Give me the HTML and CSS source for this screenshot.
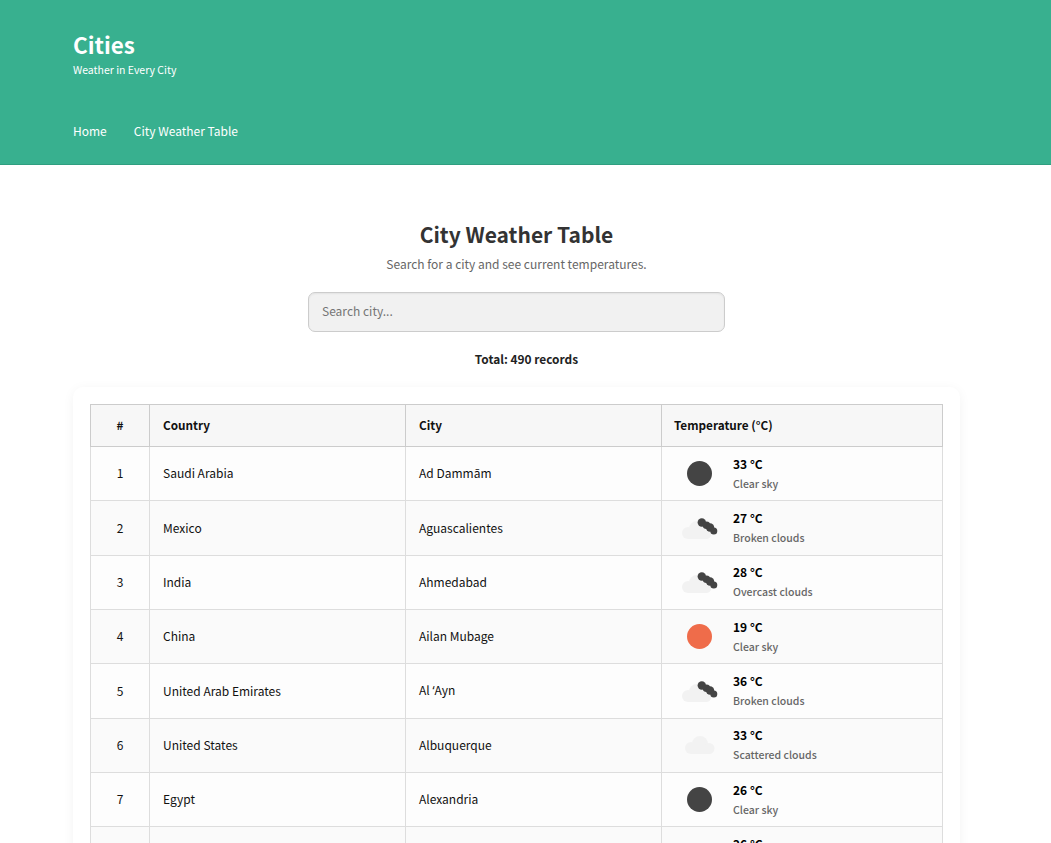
FILE: index.html
```html
<!DOCTYPE html>
<html lang="en">
<head>
  <meta charset="UTF-8">
  <meta name="viewport" content="width=device-width, initial-scale=1.0">
  <title>Cities</title>
  <link rel="stylesheet" href="styles.css">
</head>
<body>

  <header class="site-header">
    <div class="brand">
      <h1>Cities</h1>
      <p>Weather in Every City</p>
    </div>
    <nav class="site-nav">
      <a href="#">Home</a>
      <a href="#">City Weather Table</a>
    </nav>
  </header>

  <!-- icons used by the table rows -->
  <svg class="icon-defs" width="0" height="0" aria-hidden="true">
    <defs>
      <g id="cloud" fill="#f2f2f2">
        <circle cx="6" cy="17" r="6"/>
        <circle cx="15" cy="13" r="8"/>
        <circle cx="24" cy="17.500" r="5.500"/>
        <rect x="6" y="15" width="18" height="8"/>
      </g>
      <g id="dark-bits" fill="#444">
        <circle cx="19.800" cy="6.500" r="4.200"/>
        <circle cx="24.500" cy="9.200" r="3.800"/>
        <circle cx="28" cy="11.500" r="4.200"/>
        <circle cx="31.800" cy="15" r="3.500"/>
      </g>
    </defs>
  </svg>

  <main class="content">
    <h2>City Weather Table</h2>
    <p class="subtitle">Search for a city and see current temperatures.</p>
    <input class="search" type="text" placeholder="Search city...">
    <p class="total">Total: 490 records</p>

    <div class="card">
      <table class="weather">
        <thead>
          <tr>
            <th class="num">#</th>
            <th>Country</th>
            <th>City</th>
            <th>Temperature (°C)</th>
          </tr>
        </thead>
        <tbody>
          <tr>
            <td class="num">1</td><td>Saudi Arabia</td><td>Ad Dammām</td>
            <td><div class="temp"><span class="sun dark"></span><div><b>33 °C</b><small>Clear sky</small></div></div></td>
          </tr>
          <tr>
            <td class="num">2</td><td>Mexico</td><td>Aguascalientes</td>
            <td><div class="temp"><svg class="ico"><use href="#cloud"/><use href="#dark-bits"/></svg><div><b>27 °C</b><small>Broken clouds</small></div></div></td>
          </tr>
          <tr>
            <td class="num">3</td><td>India</td><td>Ahmedabad</td>
            <td><div class="temp"><svg class="ico"><use href="#cloud"/><use href="#dark-bits"/></svg><div><b>28 °C</b><small>Overcast clouds</small></div></div></td>
          </tr>
          <tr>
            <td class="num">4</td><td>China</td><td>Ailan Mubage</td>
            <td><div class="temp"><span class="sun hot"></span><div><b>19 °C</b><small>Clear sky</small></div></div></td>
          </tr>
          <tr>
            <td class="num">5</td><td>United Arab Emirates</td><td>Al <span class="quote">‘</span>Ayn</td>
            <td><div class="temp"><svg class="ico"><use href="#cloud"/><use href="#dark-bits"/></svg><div><b>36 °C</b><small>Broken clouds</small></div></div></td>
          </tr>
          <tr>
            <td class="num">6</td><td>United States</td><td>Albuquerque</td>
            <td><div class="temp"><svg class="ico"><use href="#cloud" x="3" y="-2"/></svg><div><b>33 °C</b><small>Scattered clouds</small></div></div></td>
          </tr>
          <tr>
            <td class="num">7</td><td>Egypt</td><td>Alexandria</td>
            <td><div class="temp"><span class="sun dark"></span><div><b>26 °C</b><small>Clear sky</small></div></div></td>
          </tr>
          <tr>
            <td class="num">8</td><td></td><td></td>
            <td><div class="temp"><svg class="ico"><use href="#cloud"/><use href="#dark-bits"/></svg><div><b>26 °C</b><small>Broken clouds</small></div></div></td>
          </tr>
        </tbody>
      </table>
    </div>
  </main>

</body>
</html>
```

FILE: styles.css
```css
body {
  font-family: "Noto Sans CJK SC", "Noto Sans", Arial, sans-serif;
  background-color: #fff;
  color: #333;
  margin: 0;
}

.site-header {
  background-color: #38b08f;
  border-bottom: 1px solid #2f9e80;
  color: #fff;
  height: 164px;
  padding: 0 73px;
  box-sizing: content-box;
  display: flex;
  flex-direction: column;
}

.brand {
  padding-top: 28px;
}

.brand h1 {
  font-size: 22.400px;
  line-height: 32px;
  margin: 0;
}

.brand p {
  font-size: 10.500px;
  line-height: 16px;
  margin: 2px 0 0;
}

.site-nav {
  display: flex;
  gap: 27px;
  margin-top: 43px;
}

.site-nav a {
  color: #fff;
  font-size: 12px;
  line-height: 20px;
  text-decoration: none;
}

.icon-defs {
  position: absolute;
}

.content {
  width: 887px;
  margin-left: 73px;
  padding-top: 53px;
  text-align: center;
}

.content h2 {
  font-size: 21px;
  line-height: 32px;
  margin: 0;
}

.subtitle {
  color: #666;
  font-size: 12px;
  line-height: 20px;
  margin: 4px 0 0;
}

.search {
  display: block;
  box-sizing: border-box;
  width: 417px;
  height: 40px;
  margin: 18px auto 0;
  padding: 0 13px 3px;
  background-color: #f1f1f1;
  border: 1px solid #ccc;
  border-radius: 7px;
  box-shadow: inset 0 1px 2px rgba(0, 0, 0, 0.06);
  font-family: inherit;
  font-size: 12px;
}

.search::placeholder {
  color: #757575;
}

.total {
  color: #222;
  font-size: 11.900px;
  font-weight: bold;
  line-height: 18px;
  margin: 18px 0 0;
  padding-left: 20px;
}

.card {
  background-color: #fff;
  border-radius: 10px;
  box-shadow: 0 2px 12px rgba(0, 0, 0, 0.05);
  margin-top: 19px;
  padding: 17px;
}

.weather {
  width: 100%;
  border-collapse: collapse;
  table-layout: fixed;
  text-align: left;
  font-size: 12px;
  color: #111;
}

.weather th,
.weather td {
  border: 1px solid #ddd;
  padding: 0 13px 2px;
}

.weather th {
  background-color: #f7f7f7;
  border-color: #ccc;
  height: 39px;
  font-size: 11.750px;
  font-weight: bold;
}

.weather th:nth-child(1) { width: 32px; }
.weather th:nth-child(2),
.weather th:nth-child(3) { width: 229px; }
.weather th:nth-child(4) { padding-left: 12px; }

.weather td {
  height: 51.350px;
}

.weather td:nth-child(4) {
  padding-top: 1px;
  padding-bottom: 1px;
}

.weather tbody tr:nth-child(odd) {
  background-color: #fdfdfd;
}

.weather tbody tr:nth-child(even) {
  background-color: #fafafa;
}

.weather .num {
  text-align: center;
}

.quote {
  font-family: "Noto Sans", sans-serif;
}

.temp {
  display: flex;
  align-items: center;
  gap: 16px;
  padding-left: 7px;
}

.sun {
  width: 25px;
  height: 25px;
  margin: 0 5px;
  border-radius: 50%;
  flex: none;
}

.sun.dark { background-color: #444; }
.sun.hot { background-color: #ef6c4a; }

.ico {
  width: 35px;
  height: 24px;
  flex: none;
  overflow: visible;
}

.temp b {
  display: block;
  font-size: 12px;
  line-height: 18px;
  color: #000;
}

.temp small {
  display: block;
  font-size: 10.500px;
  font-weight: 500;
  line-height: 18px;
  margin-top: 2px;
  color: #666;
}
```
